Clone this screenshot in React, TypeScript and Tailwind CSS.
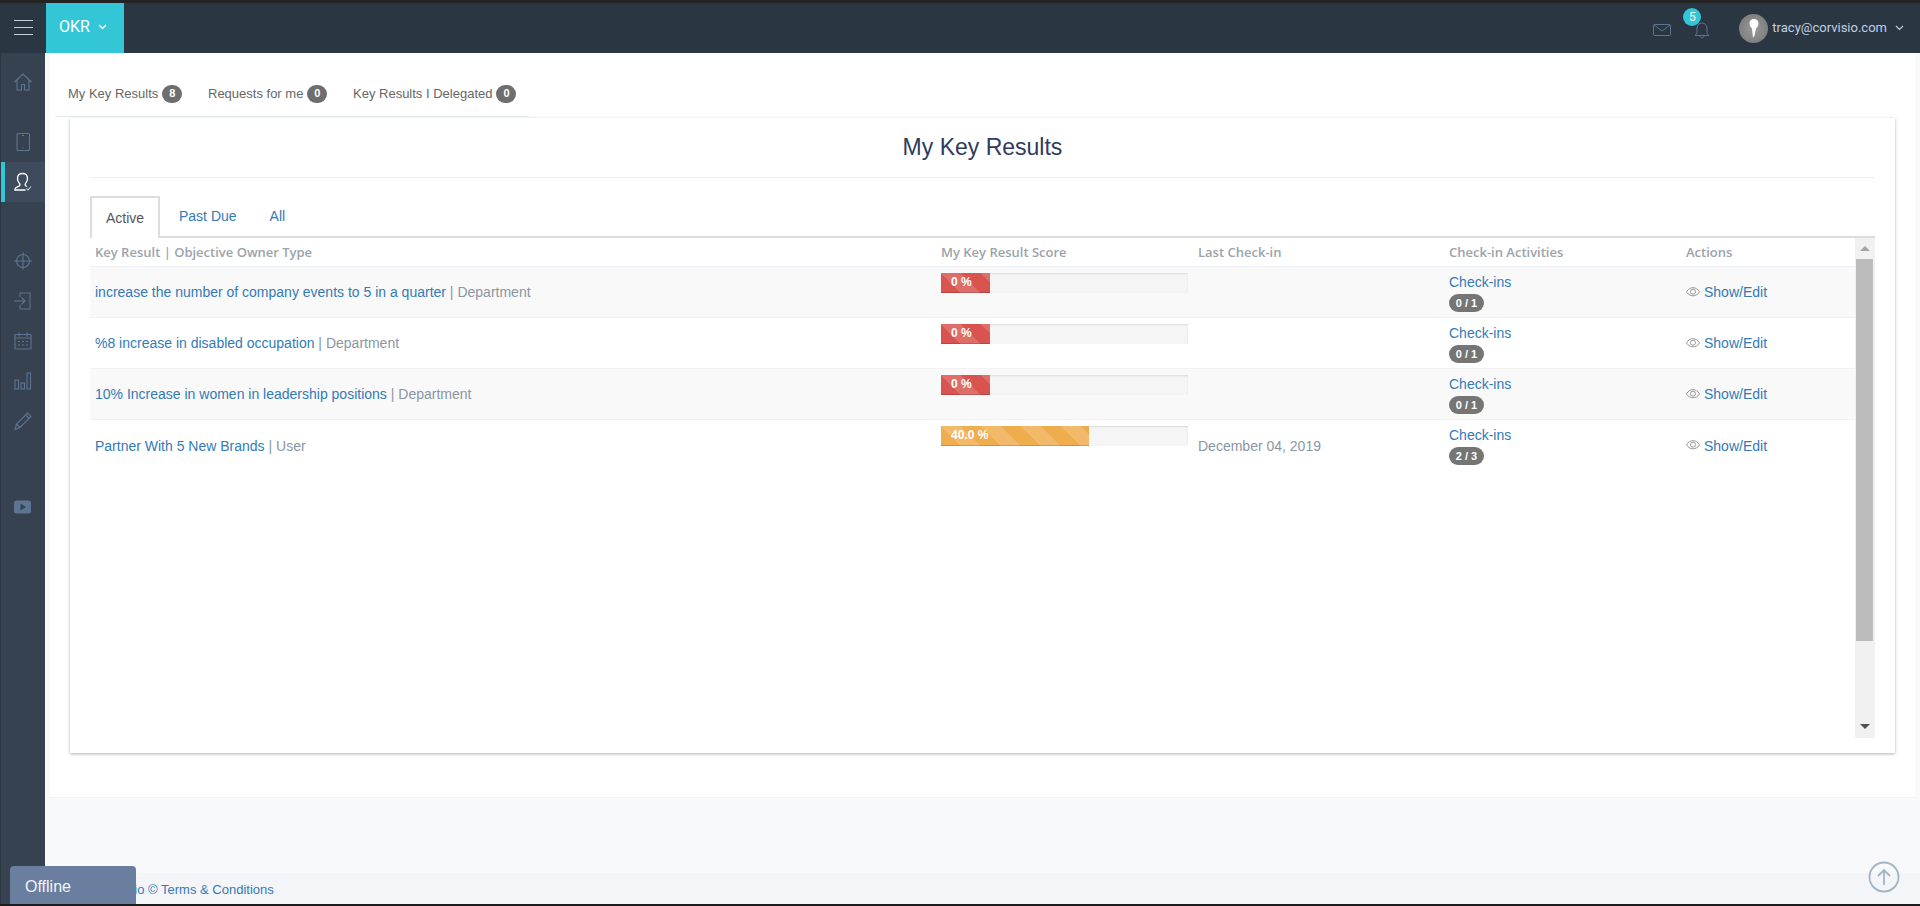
import { ReactNode } from "react";

const rows = [
  { name: "increase the number of company events to 5 in a quarter", owner: "Department", score: "0 %", fill: "w-[49px] bg-[#d9534f]", date: "", checks: "0 / 1", shade: true },
  { name: "%8 increase in disabled occupation", owner: "Department", score: "0 %", fill: "w-[49px] bg-[#d9534f]", date: "", checks: "0 / 1", shade: false },
  { name: "10% Increase in women in leadership positions", owner: "Department", score: "0 %", fill: "w-[49px] bg-[#d9534f]", date: "", checks: "0 / 1", shade: true },
  { name: "Partner With 5 New Brands", owner: "User", score: "40.0 %", fill: "w-[148px] bg-[#f0ad4e]", date: "December 04, 2019", checks: "2 / 3", shade: false },
];

const columns = "grid grid-cols-[846px_257px_251px_237px_174px]";

const Icon = ({ children, size = 20, color = "#5d7492" }: { children: ReactNode; size?: number; color?: string }) => (
  <svg width={size} height={size} viewBox="0 0 20 20" fill="none" stroke={color} strokeWidth="1.1">
    {children}
  </svg>
);

const SideItem = ({ y, children }: { y: string; children: ReactNode }) => (
  <div className={`flex h-[40px] items-center justify-center ${y}`}>{children}</div>
);

const Sidebar = () => (
  <aside className="flex w-[45px] shrink-0 flex-col border-l border-[#2c3743] bg-[#36424f] pt-[9px]">
    <SideItem y="">
      <Icon>
        <path d="M1.5 10 10 2l8.5 8M4 8v10h4.5v-5.5h3V18H16V8" />
      </Icon>
    </SideItem>
    <SideItem y="mt-[20px]">
      <Icon>
        <rect x="4" y="1.5" width="12.5" height="17" rx="1" />
        <path d="M9 3.5h2M10 15.5v1" />
      </Icon>
    </SideItem>
    <div className="relative flex h-[40px] items-center justify-center bg-[#3e4b5c]">
      <div className="absolute top-0 left-0 h-full w-[4px] bg-[#33c6d6]" />
      <Icon color="#ffffff">
        <path strokeWidth="1.300" d="M9.500 1.500c-3 0-5 2-5 5 0 2 .8 3.800 2 5 .6.7.6 1.800 0 2.300-1 .8-4.500 1.500-4.500 3.200v1h10.500" />
        <path strokeWidth="1.300" d="M9.500 1.500c3 0 5 2 5 5 0 2-.8 3.800-2 5-.6.7-.6 1.500 0 2.200l1.500.8" />
        <path d="m13.500 16.500 1.500 1.500 3-3.500" stroke="#b9d5e2" />
      </Icon>
    </div>
    <SideItem y="mt-[39px]">
      <Icon>
        <circle cx="10" cy="10" r="6.500" />
        <path d="M10 1v18M1 10h18" />
      </Icon>
    </SideItem>
    <SideItem y="">
      <Icon>
        <path d="M7 6V2h10v16H7v-4M1 10h11M8.500 6.500 12 10l-3.500 3.500" />
      </Icon>
    </SideItem>
    <SideItem y="">
      <Icon>
        <rect x="2" y="3.500" width="16" height="14.500" rx=".5" />
        <path d="M6 1.500v4M14 1.500v4M2 7h16M5 10.500h2M9 10.500h2M13 10.500h2M5 14h2M9 14h2M13 14h2" />
      </Icon>
    </SideItem>
    <SideItem y="">
      <Icon>
        <rect x="2" y="9" width="3.500" height="9" />
        <rect x="8" y="12" width="3.500" height="6" />
        <rect x="14" y="2" width="3.500" height="16" />
      </Icon>
    </SideItem>
    <SideItem y="">
      <Icon>
        <path d="M2 18.500 3.500 13 14.500 2l3.500 3.500L7 16.500ZM3.500 13 7 16.500M12.500 4l3.500 3.500" />
      </Icon>
    </SideItem>
    <SideItem y="mt-[46px]">
      <svg width="17" height="14" viewBox="0 0 17 14" className="mr-[2px]">
        <rect width="17" height="13" y=".5" rx="2.500" fill="#5d7492" />
        <path d="M6.500 3.500v7l5.500-3.500Z" fill="#36424f" />
      </svg>
    </SideItem>
  </aside>
);

const TopBar = () => (
  <header className="flex h-[50px] shrink-0 items-stretch bg-[#2b3643]">
    <div className="flex w-[46px] flex-col items-center justify-center gap-[6px] pb-[2px]">
      <span className="block h-px w-[19px] bg-[#c3d0de]" />
      <span className="block h-px w-[19px] bg-[#c3d0de]" />
      <span className="block h-px w-[19px] bg-[#c3d0de]" />
    </div>
    <div className="flex w-[78px] items-center gap-[8px] bg-[#33c6d6] pb-[3px] pl-[13px] font-['Roboto',sans-serif] text-[16px] text-white">
      OKR
      <svg width="9" height="6" viewBox="0 0 9 6" fill="none" stroke="#ffffff" strokeWidth="1.300">
        <path d="m1 1 3.500 3.500L8 1" />
      </svg>
    </div>
    <div className="flex-1" />
    <div className="flex items-center">
      <svg width="18" height="12" viewBox="0 0 18 12" fill="none" stroke="#5d7492" className="mt-[3px] mr-[23px]">
        <rect x=".5" y=".5" width="17" height="11" rx="1" />
        <path d="m1 1 8 6 8-6" />
      </svg>
      <div className="relative mt-[3px] mr-[29px]">
        <svg width="16" height="18" viewBox="0 0 16 18" fill="none" stroke="#5d7492">
          <path d="M1 14.500c1.500-1 2-2 2-4.500V7c0-2.800 2.200-5 5-5s5 2.200 5 5v3c0 2.500.5 3.500 2 4.500ZM6 14.500c0 3 4 3 4 0" />
        </svg>
        <span className="absolute top-[-13px] left-[-11px] flex h-[18px] w-[18px] items-center justify-center rounded-full bg-[#33c6d6] font-['Roboto',sans-serif] text-[12px] text-white">
          5
        </span>
      </div>
      <div className="mr-[4px] flex h-[29px] w-[29px] items-center justify-center rounded-full bg-[radial-gradient(circle,#9a9a9a,#747474)]">
        <svg width="10" height="19" viewBox="0 0 10 19" fill="#ffffff">
          <path d="M5 0C2.200 0 .5 2 .5 4.500S2 8.500 3 9.500L4 19l1.500-2.500L7 9.500c1-1 2.500-2.500 2.500-5S7.800 0 5 0Z" />
        </svg>
      </div>
      <span className="font-['Roboto',sans-serif] text-[13px] text-[#bfd0e2]">tracy@corvisio.com</span>
      <svg width="9" height="6" viewBox="0 0 9 6" fill="none" stroke="#bfd0e2" strokeWidth="1.200" className="mr-[16px] ml-[8px]">
        <path d="m1 1 3.500 3.500L8 1" />
      </svg>
    </div>
  </header>
);

const CountBadge = ({ n }: { n: number }) => (
  <span className="ml-[4px] flex h-[18px] w-[20px] items-center justify-center rounded-full bg-[#6e6e6e] text-[11px] font-bold leading-none text-white">
    {n}
  </span>
);

const TopTabs = () => (
  <div className="ml-[5px] flex h-[64px] w-[474px] items-center border-b border-[#e7ecf1] pt-[18px] text-[13px] text-[#666666]">
    <div className="ml-[13px] flex w-[140px] items-center">My Key Results<CountBadge n={8} /></div>
    <div className="flex w-[145px] items-center">Requests for me<CountBadge n={0} /></div>
    <div className="flex items-center">Key Results I Delegated<CountBadge n={0} /></div>
  </div>
);

const ScoreBar = ({ score, fill }: { score: string; fill: string }) => (
  <div className="mt-[6px] h-[20px] w-[247px] bg-[#f5f5f5] shadow-[inset_0_1px_2px_rgba(0,0,0,0.1)]">
    <div
      className={`h-full ${fill} bg-[linear-gradient(45deg,rgba(255,255,255,.15)_25%,transparent_25%,transparent_50%,rgba(255,255,255,.15)_50%,rgba(255,255,255,.15)_75%,transparent_75%,transparent)] bg-[length:40px_40px] pl-[10px] text-[12px] font-bold leading-[19px] text-white shadow-[inset_0_-1px_0_rgba(0,0,0,0.15)]`}
    >
      {score}
    </div>
  </div>
);

const KeyResultsTable = () => (
  <div className="min-w-0 flex-1 text-[14px]">
    <div className={`${columns} h-[29px] items-center border-b border-[#eef1f5] pt-[1px] font-['Open_Sans',sans-serif] text-[13px] font-semibold text-[#9ba3ab]`}>
      <div className="pl-[5px]">Key Result | Objective Owner Type</div>
      <div className="pl-[5px]">My Key Result Score</div>
      <div className="pl-[5px]">Last Check-in</div>
      <div className="pl-[5px]">Check-in Activities</div>
      <div className="pl-[5px]">Actions</div>
    </div>
    {rows.map((row, i) => (
      <div
        key={row.name}
        className={`${columns} h-[51px] ${i < rows.length - 1 ? "border-b border-[#f2f2f2]" : ""} ${row.shade ? "bg-[#f9f9f9]" : "bg-white"}`}
      >
        <div className="flex items-center pt-[1px] pl-[5px]">
          <span className="text-[#337ab7]">{row.name}</span>
          <span className="whitespace-pre text-[#8a96a3]"> | {row.owner}</span>
        </div>
        <div className="pl-[5px]">
          <ScoreBar score={row.score} fill={row.fill} />
        </div>
        <div className="flex items-center pt-[1px] pl-[5px] text-[#8a96a3]">{row.date}</div>
        <div className="pt-[5px] pl-[5px]">
          <div className="leading-[20px] text-[#337ab7]">Check-ins</div>
          <div className="mt-[2px] flex h-[18px] w-[35px] items-center justify-center rounded-full bg-[#757575] text-[11px] font-bold text-white">
            {row.checks}
          </div>
        </div>
        <div className="flex items-center pt-[1px] pl-[5px] text-[#337ab7]">
          <svg width="14" height="10" viewBox="0 0 14 10" fill="none" stroke="#999999" className="mr-[4px] mb-[2px]">
            <path d="M.5 5C2 2 4.500.7 7 .7S12 2 13.500 5C12 7.500 9.500 8.800 7 8.800S2 7.500.5 5Z" />
            <circle cx="7" cy="4.700" r="2.500" />
          </svg>
          Show/Edit
        </div>
      </div>
    ))}
  </div>
);

const Scrollbar = () => (
  <div className="flex w-[20px] shrink-0 flex-col items-center bg-[#f1f1f1] pr-[1px]">
    <div className="flex h-[21px] items-center justify-center">
      <div className="h-0 w-0 border-x-[5px] border-b-[5px] border-x-transparent border-b-[#a3a3a3]" />
    </div>
    <div className="h-[382px] w-[17px] bg-[#bcbcbc]" />
    <div className="flex-1" />
    <div className="flex h-[24px] items-center justify-center">
      <div className="h-0 w-0 border-x-[5px] border-t-[5px] border-x-transparent border-t-[#505050]" />
    </div>
  </div>
);

const Card = () => (
  <div className="mt-[1px] ml-[20px] flex h-[635px] w-[1825px] flex-col bg-white px-[20px] shadow-[0_1px_3px_rgba(0,0,0,0.3)]">
    <h1 className="flex h-[60px] shrink-0 items-center justify-center border-b border-[#eeeeee] pb-[1px] text-[23px] text-[#2f3b5c]">
      My Key Results
    </h1>
    <div className="mt-[18px] flex h-[42px] shrink-0 items-stretch border-b-2 border-[#dddddd] pt-[1px] text-[14px]">
      <div className="mt-[-1px] mb-[-2px] flex w-[70px] items-center justify-center border-2 border-b-0 border-[#dddddd] bg-white text-[#555555]">
        Active
      </div>
      <div className="ml-[19px] flex items-center text-[#337ab7]">Past Due</div>
      <div className="ml-[33px] flex items-center text-[#337ab7]">All</div>
    </div>
    <div className="flex h-[500px] shrink-0">
      <KeyResultsTable />
      <Scrollbar />
    </div>
  </div>
);

const App = () => (
  <div className="relative flex h-[906px] w-full flex-col overflow-hidden bg-[#f8f9fb] font-['Liberation_Sans',Arial,sans-serif]">
    <div className="h-[3px] shrink-0 bg-[#232323]" />
    <TopBar />
    <div className="flex min-h-0 flex-1">
      <Sidebar />
      <main className="flex min-w-0 flex-1 flex-col">
        <div className="mr-[5px] ml-[5px] h-[745px] shrink-0 border-b border-[#eef1f5] bg-white">
          <TopTabs />
          <Card />
        </div>
        <div className="flex-1" />
        <footer className="flex h-[31px] shrink-0 items-center bg-[#f4f5f8] pt-[2px] pl-[20px] text-[13px] text-[#337ab7]">
          2019 Corvisio © Terms &amp; Conditions
        </footer>
      </main>
    </div>
    <div className="h-[2px] shrink-0 bg-[#1c1c1c]" />
    <div className="absolute bottom-[2px] left-[10px] flex h-[38px] w-[126px] items-center rounded-t-[4px] bg-[#6a7fa0] pt-[4px] pl-[15px] text-[16px] text-[#f2f4f7]">
      Offline
    </div>
    <svg width="32" height="32" viewBox="0 0 32 32" fill="none" stroke="#a3b3c6" strokeWidth="1.800" className="absolute top-[861px] left-[1868px]">
      <circle cx="16" cy="16" r="14.500" />
      <path d="M16 24V9M10 15l6-6 6 6" />
    </svg>
  </div>
);

export default App;
